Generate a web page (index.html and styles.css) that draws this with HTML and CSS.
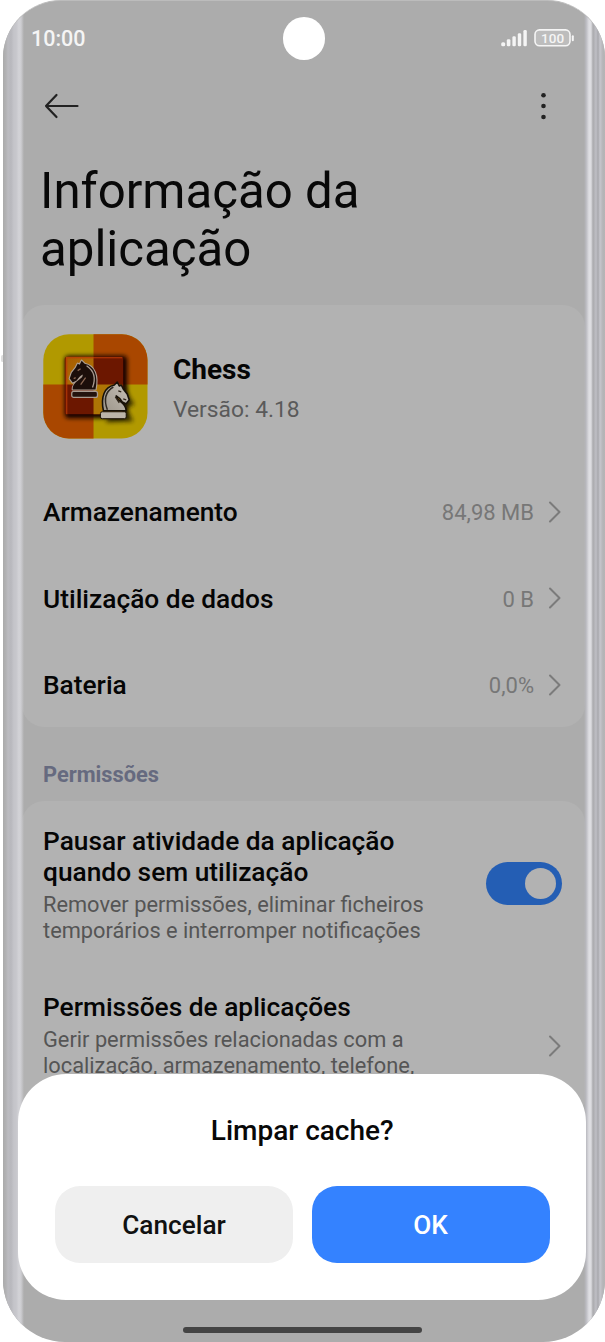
FILE: index.html
```html
<!DOCTYPE html>
<html lang="pt">
<head>
<meta charset="utf-8">
<title>Informação da aplicação</title>
<link rel="stylesheet" href="styles.css">
</head>
<body>
<div class="side-mark"></div>
<main class="phone">
  <div class="camera"></div>
  <div class="screen">
    <header class="status">
      <span class="clock">10:00</span>
      <svg class="status-icons" width="76" height="22" viewBox="0 0 76 22">
        <g fill="#f5f5f5">
          <rect x="1.2" y="14.2" width="4" height="4" rx="1.5"/>
          <rect x="6.8" y="11.2" width="3.6" height="7" rx="1.3"/>
          <rect x="12.4" y="8.2" width="3.4" height="10" rx="1.3"/>
          <rect x="17.8" y="5.2" width="3.4" height="13" rx="1.3"/>
          <rect x="23.4" y="2" width="3.4" height="16.2" rx="1.3"/>
          <rect x="71.8" y="7.2" width="2" height="6" rx="1"/>
        </g>
        <rect x="35" y="1.9" width="35" height="15.8" rx="4.5" fill="#bdbdbd" stroke="#f5f5f5" stroke-width="1.6"/>
        <text x="52.6" y="14.9" class="battery-text">100</text>
      </svg>
    </header>
    <nav class="toolbar">
      <svg width="38" height="28" viewBox="0 0 38 28" fill="none" stroke="#222" stroke-width="2.2" stroke-linecap="round" stroke-linejoin="round"><path d="M35.5 14H4M14.5 3L4 14L14.5 25"/></svg>
      <svg width="10" height="30" viewBox="0 0 10 30" fill="#222"><circle cx="4.5" cy="4.2" r="2.3"/><circle cx="4.5" cy="15" r="2.3"/><circle cx="4.5" cy="26" r="2.3"/></svg>
    </nav>
    <h1 class="title">Informação da<br>aplicação</h1>

    <section class="card summary">
      <div class="app">
        <svg class="app-icon" width="105" height="105" viewBox="0 0 106 106">
          <defs>
            <clipPath id="round"><rect x=".3" y=".3" width="105.2" height="105.2" rx="26"/></clipPath>
            <filter id="soft" x="-30%" y="-30%" width="160%" height="160%"><feGaussianBlur stdDeviation="2"/></filter>
            <linearGradient id="ivory" x2="1" y2="1"><stop stop-color="#c8c2b8"/><stop offset="1" stop-color="#9c958a"/></linearGradient>
            <linearGradient id="gold" x2="1" y2="1"><stop stop-color="#a85a00"/><stop offset="1" stop-color="#b17808"/></linearGradient>
            <path id="knight" d="M3 29C3 20 14 19 13 14C11 15 9 17 7 20L3 22L0 18L2 12L6 7L8 3L10 4L12 0L15 3C25 5 29 15 26 29Z"/>
          </defs>
          <g clip-path="url(#round)">
            <rect width="106" height="106" fill="#b19900"/>
            <path d="M51 0H106V51H51ZM0 51H51V106H0Z" fill="#a94700"/>
            <rect x="22" y="22" width="63" height="63" rx="4" fill="#160600" filter="url(#soft)"/>
            <path d="M76 45L92 71L84 75L91 88L64 89Z" fill="#241b00" opacity=".85" filter="url(#soft)"/>
            <rect x="22" y="23" width="59" height="58" rx="2" fill="#6c1700"/>
            <path d="M23 23H51V51H23Z" fill="url(#gold)"/>
            <path d="M51 51H80V81H51Z" fill="#ae7505"/>
            <path d="M24 81V24H80" fill="none" stroke="#bc3c08" stroke-width="1"/>
          </g>
          <g transform="translate(27 27)">
            <use href="#knight" fill="#1c0e0a" stroke="#afa095" stroke-width="2.2" stroke-linejoin="round"/>
            <rect x="2" y="31" width="26" height="6" rx="2" fill="#24130e" stroke="#a99b91" stroke-width="1.3"/>
            <use href="#knight" fill="#1c0e0a"/>
            <path d="M17 5C26 11 26 19 23 27" fill="none" stroke="#a99b91" stroke-width="1.3"/>
            <path d="M8 10L11 8M4 18L6 17M11 24L16 17" stroke="#8b6753" stroke-width="1.3"/>
          </g>
          <g transform="translate(58 48.500)">
            <g transform="translate(29 0) scale(-1 1)">
              <use href="#knight" fill="url(#ivory)" stroke="#171108" stroke-width="1.6" stroke-linejoin="round"/>
              <path d="M16 5C26 11 25 20 22 28" fill="none" stroke="#302920" stroke-width="1.5"/>
              <path d="M8 10L11 9M3 18L6 17M14 15L10 21" stroke="#30261b" stroke-width="1.3"/>
            </g>
            <rect x="0" y="30" width="26" height="7" rx="1.8" fill="#bcb4a8" stroke="#1a1106"/>
          </g>
        </svg>
        <div><h2 class="app-name">Chess</h2><p class="version">Versão: 4.18</p></div>
      </div>
      <div class="row"><span class="label">Armazenamento</span><span class="value">84,98 MB</span><svg class="chevron" viewBox="0 0 14 24"><path d="M2 2.5L11.5 12L2 21.5"/></svg></div>
      <div class="row"><span class="label">Utilização de dados</span><span class="value">0 B</span><svg class="chevron" viewBox="0 0 14 24"><path d="M2 2.5L11.5 12L2 21.5"/></svg></div>
      <div class="row"><span class="label">Bateria</span><span class="value">0,0%</span><svg class="chevron" viewBox="0 0 14 24"><path d="M2 2.5L11.5 12L2 21.5"/></svg></div>
    </section>

    <h3 class="section-title">Permissões</h3>
    <section class="card permissions">
      <div class="permission">
        <div><h4 class="label">Pausar atividade da aplicação<br>quando sem utilização</h4><p class="detail">Remover permissões, eliminar ficheiros<br>temporários e interromper notificações</p></div>
        <span class="switch"><span class="knob"></span></span>
      </div>
      <div class="permission second">
        <div><h4 class="label">Permissões de aplicações</h4><p class="detail">Gerir permissões relacionadas com a<br>localização, armazenamento, telefone,</p></div>
        <svg class="chevron" viewBox="0 0 14 24"><path d="M2 2.5L11.5 12L2 21.5"/></svg>
      </div>
    </section>
  </div>
  <div class="home-bar"></div>
</main>
<section class="dialog">
  <h2 class="dialog-title">Limpar cache?</h2>
  <div class="actions"><button class="button">Cancelar</button><button class="button primary">OK</button></div>
</section>
</body>
</html>
```

FILE: styles.css
```css
* { box-sizing: border-box; }
body { margin: 0; background: #fff; font-family: Roboto, sans-serif; position: relative; width: 605px; height: 1342px; overflow: hidden; }
h1, h2, h3, h4, p { margin: 0; font-weight: 400; }
svg { display: block; flex: none; }
.side-mark { position: absolute; left: 1px; top: 355px; width: 3px; height: 7px; background: #ddd; border-radius: 2px; }
.phone {
  position: relative; height: 1342px; margin-left: 3px; padding: 0 20px 0 19px; overflow: hidden;
  border-radius: 58px 58px 62px 62px; border-top: 1px solid #bcbcbc;
  background: #acacac;
}
.phone::before, .phone::after { content: ""; position: absolute; top: 0; bottom: 0; z-index: 1; }
.phone::before {
  left: 0; width: 21px;
  background: linear-gradient(90deg, #aaa 0, #b2b2b4 3px, #bbbbc0 5px, #b8b8bd 8px, #c5c5ca 11px, #c6c6cb 13px, #d3d3d7 16px, #cdcdd1 18px, rgba(172, 172, 172, 0) 21px);
}
.phone::after {
  right: 0; width: 21px;
  background: linear-gradient(90deg, rgba(172, 172, 172, 0) 0, #b9b9bf 2px, #dedee2 5px, #dddde1 7px, #aaaaad 9px, #bfbfc5 12px, #a8a8ad 14px, #c6c6cc 16px, #b4b4b7 19px, #b5b5b5 21px);
}
.camera { position: absolute; left: 279.5px; top: 16px; width: 42.5px; height: 42.5px; border-radius: 50%; background: #fff; }
.screen { height: 1341px; display: flex; flex-direction: column; }
.status { height: 75px; padding: 0 9px; display: flex; justify-content: space-between; align-items: center; color: #f5f5f5; }
.clock { font-size: 21.5px; font-weight: 500; }
.battery-text { font: 500 13.5px Roboto, sans-serif; fill: #f5f5f5; text-anchor: middle; letter-spacing: 0; }
.toolbar { height: 60px; padding: 0 36px 0 20px; display: flex; justify-content: space-between; align-items: center; }
.title { height: 169px; padding: 26px 0 0 18px; font-size: 49.2px; line-height: 58px; color: #080808; white-space: nowrap; }
.card { background: #b2b2b2; border-radius: 22px; }
.summary { height: 422px; padding: 29px 23px 0 21px; }
.app { height: 135.5px; display: flex; gap: 25px; align-items: flex-start; }
.app-name { margin-top: 20px; font-size: 28px; line-height: 32px; font-weight: 700; color: #050505; }
.version { margin-top: 9px; font-size: 22.8px; line-height: 30px; color: #5a5a5a; }
.row { height: 86.5px; display: flex; align-items: center; }
.label { font-size: 26.3px; line-height: 31px; font-weight: 500; color: #050505; white-space: nowrap; }
.value { margin-left: auto; margin-right: 14px; font-size: 22px; color: #777; }
.chevron { width: 14px; height: 24px; fill: none; stroke: #7b7b7b; stroke-width: 2; stroke-linecap: round; stroke-linejoin: round; }
.row .chevron { margin-bottom: 2px; }
.section-title { height: 74px; padding: 33px 0 0 21px; font-size: 21.8px; line-height: 30px; font-weight: 700; color: #666a7f; }
.permissions { height: 320px; padding: 25px 23px 0 21px; }
.permission { height: 166px; display: flex; justify-content: space-between; }
.detail { margin-top: 4px; font-size: 21.8px; line-height: 26px; color: #555; white-space: nowrap; }
.switch { width: 76px; height: 43px; margin-top: 36px; padding: 6px; display: flex; justify-content: flex-end; border-radius: 22px; background: #245eb4; }
.knob { width: 31px; height: 31px; border-radius: 50%; background: #b2b2b2; }
.second .chevron { margin-top: 42px; }
.home-bar { position: absolute; left: 179.5px; top: 1326px; width: 239.5px; height: 5.5px; border-radius: 3px; background: #444; }
.dialog { position: absolute; z-index: 2; left: 18px; top: 1074px; width: 568px; height: 226px; padding: 39px 36.5px 0 37px; border-radius: 48px; background: #fff; }
.dialog-title { font-size: 28px; line-height: 36px; font-weight: 500; text-align: center; color: #080808; }
.actions { margin-top: 37px; display: grid; grid-template-columns: 1fr 1fr; gap: 18.5px; }
.button { height: 77px; padding: 0; border: 0; border-radius: 25px; background: #efefef; color: #111; font: 500 26.2px Roboto, sans-serif; }
.primary { background: #3482ff; color: #fff; }
```
